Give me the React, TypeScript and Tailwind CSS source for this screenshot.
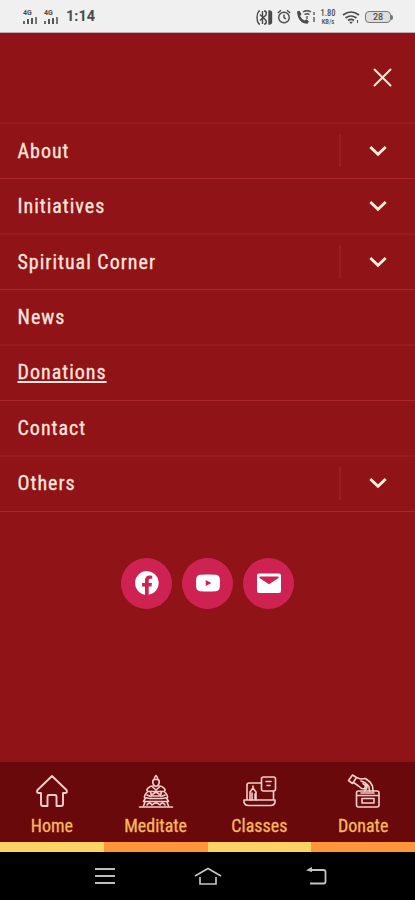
import type { ReactNode } from "react";

interface MenuItem {
  label: string;
  expandable?: boolean;
  divider?: boolean;
  underlined?: boolean;
  row: string;
}

const SOFT = "border-b-2 border-[#991b1f]";
const SHARP = "border-b border-[#a8262a]";

const menuItems: MenuItem[] = [
  { label: "About", expandable: true, divider: true, row: `h-[55px] pb-px ${SHARP}` },
  { label: "Initiatives", expandable: true, row: `h-[56px] pb-px ${SOFT}` },
  { label: "Spiritual Corner", expandable: true, divider: true, row: `h-[55px] pb-px ${SHARP}` },
  { label: "News", row: `h-[56px] pb-px ${SOFT}` },
  { label: "Donations", underlined: true, row: `h-[55px] pb-[2px] ${SHARP}` },
  { label: "Contact", row: `h-[56px] pb-px ${SOFT}` },
  { label: "Others", expandable: true, divider: true, row: `h-[55px] pb-[2px] ${SHARP}` },
];

export default function App() {
  return (
    <div className="flex h-[900px] w-[415px] flex-col overflow-hidden bg-[#8f1317] font-['Roboto_Condensed','Roboto',sans-serif]">
      <StatusBar />

      {/* Close button */}
      <div className="flex h-[91px] shrink-0 justify-end border-b-2 border-[#991b1f] pt-[35px] pr-[23px]">
        <svg className="h-[19px] w-[19px]" viewBox="0 0 19 19" stroke="#fbe3d2" strokeWidth="2" strokeLinecap="round">
          <path d="M1.5 1.5l16 16M17.5 1.5l-16 16" />
        </svg>
      </div>

      <nav className="shrink-0">
        {menuItems.map((item) => (
          <MenuRow key={item.label} item={item} />
        ))}
      </nav>

      <div className="mt-[45.5px] flex justify-center gap-[10px]">
        <SocialButton>
          <path d="M12 0a12 12 0 0 0-2 23.83v-8.4H7v-3.5h3V9.3c0-3 1.8-4.7 4.5-4.7 1.3 0 2.7.25 2.7.25v3h-1.55c-1.5 0-1.95.93-1.95 1.88v2.2h3.3l-.53 3.5H13.7v8.4A12 12 0 0 0 12 0z" />
        </SocialButton>
        <SocialButton>
          <path d="M4 3.8Q12 3 20 3.8Q23.5 4.1 23.8 8Q24.2 12 23.8 16Q23.5 19.9 20 20.2Q12 21 4 20.2Q.5 19.9.2 16Q-.2 12 .2 8Q.5 4.1 4 3.8zM9.7 9v6l5.7-3z" fillRule="evenodd" />
        </SocialButton>
        <SocialButton>
          <path d="M2 2.5h20Q24 2.5 24 4.5v15.5Q24 22 22 22H2Q0 22 0 20V4.5Q0 2.5 2 2.5zM2.5 5.5v1.5L12 13.2 21.5 7v-1.5z" fillRule="evenodd" />
        </SocialButton>
      </div>

      <BottomNav />
      <SystemNav />
    </div>
  );
}

function MenuRow({ item }: { item: MenuItem }) {
  return (
    <div className={`flex items-center pl-[17.5px] ${item.row}`}>
      <span
        className={`text-[20px] leading-[26px] tracking-[1px] text-[#fde4dd] [font-stretch:75%] [-webkit-text-stroke:0.3px] ${
          item.underlined ? "underline decoration-2 underline-offset-2" : ""
        }`}
      >
        {item.label}
      </span>
      <span className="flex-1" />
      {item.divider && <span className="h-[33px] w-[2px] bg-[#9b1e22]" />}
      {item.expandable && (
        <svg className="mr-[28px] ml-[28px] h-[12px] w-[18px]" viewBox="0 0 18 12" fill="none" stroke="#fff0df" strokeWidth="2.8">
          <path d="M1.3 2l7.7 7.3L16.7 2" />
        </svg>
      )}
    </div>
  );
}

function SocialButton({ children }: { children: ReactNode }) {
  return (
    <button className="flex h-[51px] w-[51px] items-center justify-center rounded-full bg-[#ce2352]">
      <svg className="h-[24px] w-[24px]" viewBox="0 0 24 24" fill="white">
        {children}
      </svg>
    </button>
  );
}

function StatusBar() {
  return (
    <div className="flex h-[33px] shrink-0 items-center border-b border-[#c9a9aa] bg-[#f0f0f0] pt-[2px] pr-[22px] pl-[23px] font-[Roboto,sans-serif] text-[#4b4b4b]">
      <Signal />
      <Signal />
      <span className="ml-px pt-px text-[14.5px] leading-none font-bold">1:14</span>

      <div className="ml-auto flex items-center">
        <svg className="h-[17px] w-[17px]" viewBox="0 0 17 17" fill="none" stroke="currentColor" strokeWidth="1.4">
          <path d="M4 2H3Q1 4 1 8.5T3 15h1M8 2h1q2 1 1 4L4 11.5M4 5.5l6 6q1 2.5-1 3.5H8M6.5 2v13" />
          <path d="M13 2q3 0 2.5 3v7q.5 3-2.5 3z" fill="currentColor" />
        </svg>
        <svg className="ml-[4px] h-[16px] w-[14px]" viewBox="0 0 14 16" fill="none" stroke="currentColor" strokeWidth="1.4">
          <circle cx="7" cy="8.5" r="5.3" />
          <path d="M7 5.5v3l2 1.3M.8 4L4 1.2M10 1.2L13.2 4" />
        </svg>
        <svg className="ml-[5px] h-[16px] w-[20px]" viewBox="0 0 20 16" fill="none" stroke="currentColor" strokeWidth="1.3">
          <path d="M1 2.5l2.5-.8 2 3.5-1.5 1.8q1.5 3 4.5 4.5l2-1.3 2.5 2.3-1.5 2.3Q2 14.5 1 2.5z" fill="currentColor" stroke="none" />
          <path d="M7 3q4-2.5 8 0M8.5 5.5q2.5-1.5 5 0M11 7v3M18 3v3M18 8v5" />
        </svg>
        <div className="ml-[4px] flex w-[16px] flex-col items-center font-medium [font-stretch:75%]">
          <span className="text-[8.5px] leading-[10px]">1.80</span>
          <span className="text-[6.5px] leading-[8px]">KB/s</span>
        </div>
        <svg className="ml-[6px] h-[15px] w-[18px]" viewBox="0 0 18 15" fill="none" stroke="currentColor" strokeWidth="1.7">
          <path d="M1 5q8-6 16 0M3.5 8q5.5-4 11 0M6 10.5q3-2.2 6 0" />
          <path d="M7 11.8h4L9 14z" fill="currentColor" stroke="none" />
          <path d="M15.5 10v3" strokeWidth="1" />
        </svg>
        <div className="ml-[5px] flex h-[12px] w-[26px] items-center justify-center rounded-[4px] border border-[#777] bg-[#dedede] text-[9px] leading-none font-medium">
          28
        </div>
        <span className="h-[5px] w-[2px] rounded-r-sm bg-[#777]" />
      </div>
    </div>
  );
}

function Signal() {
  return (
    <div className="mr-[5px] flex w-[16px] flex-col">
      <span className="text-[7px] leading-[7px] font-bold">4G</span>
      <div className="flex h-[7px] items-end gap-[2px]">
        <i className="h-[3px] w-[2px] bg-[#666]" />
        <i className="h-[5px] w-[2px] bg-[#555]" />
        <i className="h-[6px] w-[2px] bg-[#555]" />
        <i className="h-[7px] w-[2px] bg-[#777]" />
      </div>
    </div>
  );
}

function BottomNav() {
  return (
    <div className="mt-auto grid h-[90px] shrink-0 grid-cols-4 bg-[#6a090b]">
      <Tab label="Home" stripe="border-[#fcd364]">
        <path d="M3.5 17L18 3 32.5 17q1.3 3-1 3h-2.5v11q0 2-2 2h-4.5V23.5q0-1.5-1.5-1.5h-6Q13.5 22 13.5 23.5V33H9Q7 33 7 31V20h-2.5q-2.3 0-1-3z" strokeWidth="1.9" />
      </Tab>
      <Tab label="Meditate" stripe="border-[#fd953a]">
        <path d="M18 2.5q2 2 1.5 3.5 2.5 1.5 1.5 4.5-.5 2.5-3 3-2.5-.5-3-3-1-3 1.5-4.5-.5-1.5 1.5-3.5zM16.5 6.5h3" />
        <path d="M15.5 13q-4.5 0-6.5 3.5-.5 2 2 2h14q2.5 0 2-2-2-3.5-6.5-3.5M14.5 14l3.5 3 3.5-3" />
        <path d="M10 18.5q-4 3.5-3.5 6l5.5 1h12l5.5-1q.5-2.5-3.5-6M13 18.5q-1 3 2 4.5h6q3-1.5 2-4.5M15 21l3-2 3 2M9 22l4 1.5M27 22l-4 1.5" />
        <path d="M7.5 25l-2 3.5h25L28.5 25M7 29l-1.5 4M29 29l1.5 4M9 32q2.5-4 5 0 4-4 8 0 2.5-4 5 0" />
        <path d="M1.5 34h33" />
      </Tab>
      <Tab label="Classes" stripe="border-[#fcd364]">
        <path d="M20 10H8q-2 0-2 2v15M32.5 18v9M3 27h31v2.5q-1 3-4 3H7q-3 0-4-3z" />
        <path d="M22.5 4h10q2 0 2 2v10q0 2-2 2h-10q-2 0-2-2V6q0-2 2-2zM25 8.5h5M26 12.5h3" />
        <path d="M9 27v-8l3-4 3 4v8M12 15v-2M11 20v7M14 21v5" />
      </Tab>
      <Tab label="Donate" stripe="border-[#fd953a]">
        <path d="M3.5 7.5L7.5 2l4 2.5-4 6zM11.5 4.5l4 1.500 5-.5 4.500 3.500 2.500 4 .5 5M8.500 9.500l5 3.500 3 2.500 5 .5.500-2.500-4-3M16 8l4 1.500 4 4M20 18q-1-5 2.500-6.500M24.500 18l-.5-4" />
        <path d="M13.500 18h18.500q2 0 2 2v12q0 2-2 2H13.500q-2 0-2-2V20q0-2 2-2zM12 22.500h22M16 20h13M17 25.500h12v4.500H17z" />
      </Tab>
    </div>
  );
}

function Tab({ label, stripe, children }: { label: string; stripe: string; children: ReactNode }) {
  return (
    <div className={`flex flex-col items-center border-b-[10px] pt-[11px] ${stripe}`}>
      <svg className="h-[36px] w-[36px]" viewBox="0 0 36 36" fill="none" stroke="#f4cfcb" strokeWidth="1.6" strokeLinejoin="round" strokeLinecap="round">
        {children}
      </svg>
      <span className="mt-[5px] text-[18px] leading-[24px] text-[#f8b75c] [font-stretch:75%] [-webkit-text-stroke:0.3px]">
        {label}
      </span>
    </div>
  );
}

function SystemNav() {
  return (
    <div className="flex h-[48px] shrink-0 items-center bg-black pl-[95px]">
      <svg className="h-[18px] w-[20px]" viewBox="0 0 20 18" stroke="#bdbdbd" strokeWidth="2">
        <path d="M0 2h20M0 9h20M0 16h20" />
      </svg>
      <svg className="ml-[79px] h-[18px] w-[28px]" viewBox="0 0 28 18" fill="none" stroke="#c4c4c4" strokeWidth="1.7">
        <path d="M1 9L14 1.5 27 9M6 10v7h16v-7" />
      </svg>
      <svg className="ml-[84px] h-[18px] w-[21px]" viewBox="0 0 21 18" fill="none" stroke="#c4c4c4" strokeWidth="1.8">
        <path d="M4 3h13.5q2 0 2 2v9.5q0 2-2 2H4" />
        <path d="M0 3.3L6 0v5z" fill="#c4c4c4" stroke="none" />
      </svg>
    </div>
  );
}
